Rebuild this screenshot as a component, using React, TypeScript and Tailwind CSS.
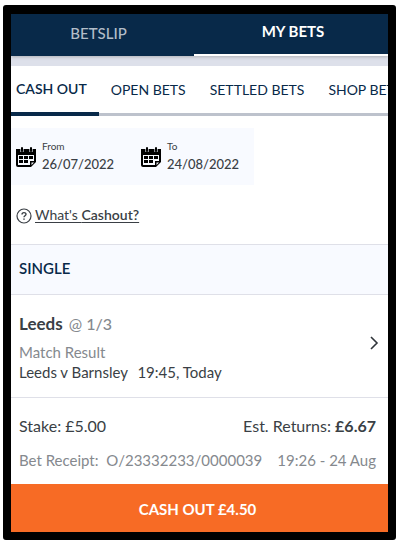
import { useState } from 'react';
import clsx from 'clsx';

const filters = ['CASH OUT', 'OPEN BETS', 'SETTLED BETS', 'SHOP BETS'];

const CalendarIcon = () => (
  <svg className="size-5 shrink-0" viewBox="0 0 20 20" aria-hidden="true">
    <path d="M0 2H20V15L15 20H2Q0 20 0 18Z" fill="#000" />
    <path d="M2 8H18V14H14V18H2Z" fill="#f8faff" />
    <path d="M3 9h4v3H3zM8 9h4v3H8zM13 9h4v3h-4zM3 13h4v3H3zM8 13h4v3H8z" fill="#000" />
    <path d="M15.5 15.5H18L15.5 18Z" fill="#f8faff" />
    <path d="M4 2h4v3H4zM13 2h4v3h-4z" fill="#8d9097" />
    <rect x="5" y="0" width="2" height="5" rx="1" fill="#000" />
    <rect x="14" y="0" width="2" height="5" rx="1" fill="#000" />
  </svg>
);

const HelpIcon = () => (
  <svg className="size-4 shrink-0" viewBox="0 0 16 16" fill="none" stroke="#3a3f45" aria-hidden="true">
    <circle cx="8" cy="8" r="7" strokeWidth="1.2" />
    <path d="M6 6.5C6 4 10 4 10 6.3C10 7.8 8 7.8 8 9.3" strokeWidth="1.4" />
    <path d="M8 10.4V11.8" strokeWidth="1.5" />
  </svg>
);

interface DateFieldProps {
  id: string;
  label: string;
  defaultValue: string;
}

const DateField = ({ id, label, defaultValue }: DateFieldProps) => (
  <div className="flex w-[125px] shrink-0 items-center gap-1.5 pl-[5px]">
    <CalendarIcon />
    <div className="min-w-0 flex-1 pb-0.5">
      <label htmlFor={id} className="block text-[10px] leading-4">{label}</label>
      <input id={id} defaultValue={defaultValue} className="block w-full bg-transparent text-[13px] leading-5 font-medium outline-none" />
    </div>
  </div>
);

const App = () => {
  const [filter, setFilter] = useState('CASH OUT');

  return (
    <div className="bg-white px-[5px] pt-[5px] pb-1 pl-[3px] font-[Lato,sans-serif] text-[#3a3f45]">
      <main className="overflow-hidden rounded-[3px] border-8 border-t-9 border-black bg-white">
        <nav className="relative grid h-[42px] grid-cols-[183fr_194fr] bg-[#082949] text-[15px] font-bold shadow-[0_1px_3px_#8888]">
          <button className="pr-2 pb-1 font-medium text-[#b2bdc8]">BETSLIP</button>
          <button className="border-b-2 border-white pb-1.5 pl-1 text-white">MY BETS</button>
        </nav>
        <div className="h-2.5 bg-[#dde0ea]" />

        <div className="flex h-[50px] overflow-hidden text-sm whitespace-nowrap text-[#082949]">
          {filters.map((name) => (
            <button
              key={name}
              onClick={() => setFilter(name)}
              className={clsx(
                'shrink-0 pr-3',
                filter === name
                  ? 'border-b-4 border-[#082949] pl-[5px] font-semibold'
                  : 'border-b-3 border-[#bdc2cc] pl-3'
              )}
            >
              {name}
            </button>
          ))}
        </div>

        <div className="mt-3 flex h-[57px] w-[243px] bg-[#f8faff]">
          <DateField id="from" label="From" defaultValue="26/07/2022" />
          <DateField id="to" label="To" defaultValue="24/08/2022" />
        </div>

        <div className="flex h-[59px] items-center pt-0.5 pl-[5px]">
          <a href="#cashout" className="flex items-center gap-[3px] text-sm">
            <HelpIcon />
            <span className="pb-px underline underline-offset-2">What's <b className="font-semibold">Cashout?</b></span>
          </a>
        </div>

        <h2 className="flex h-[51px] items-center border-y border-[#dfe0e8] bg-[#f8faff] px-2 pb-0.5 text-[15px] font-semibold text-[#082949]">
          SINGLE
        </h2>

        <section className="flex h-[103px] items-center justify-between border-b border-[#dfe0e8] px-2">
          <div className="pt-[3px] text-[15px] leading-5">
            <div className="mb-2 flex items-center gap-1.5">
              <h3 className="text-[17px] font-bold">Leeds</h3>
              <span className="text-base leading-5 text-[#85898e]">@ <span className="font-medium">1/3</span></span>
            </div>
            <p className="text-[#85898e]">Match Result</p>
            <p>Leeds v Barnsley <span className="ml-1.5">19:45, Today</span></p>
          </div>
          <button aria-label="Bet details" className="pb-1.5">
            <svg className="h-4 w-3" viewBox="0 0 12 16" fill="none" stroke="#30353b" strokeWidth="1.6">
              <path d="M3 2L9 8L3 14" />
            </svg>
          </button>
        </section>

        <section className="flex h-[86px] flex-col gap-2.5 px-2 pt-4 text-[15px] leading-6">
          <div className="flex justify-between pr-1 text-base">
            <p>Stake: £5.00</p>
            <p>Est. Returns: <b>£6.67</b></p>
          </div>
          <div className="flex justify-between pr-1 whitespace-nowrap text-[#85898e]">
            <p>Bet Receipt: <span className="ml-1">O/23332233/0000039</span></p>
            <p>19:26 - 24 Aug</p>
          </div>
        </section>

        <button className="block h-12 w-full bg-[#f76b25] pt-0.5 pr-1 text-[15px] font-bold text-white">
          CASH OUT £4.50
        </button>
      </main>
    </div>
  );
};

export default App;
